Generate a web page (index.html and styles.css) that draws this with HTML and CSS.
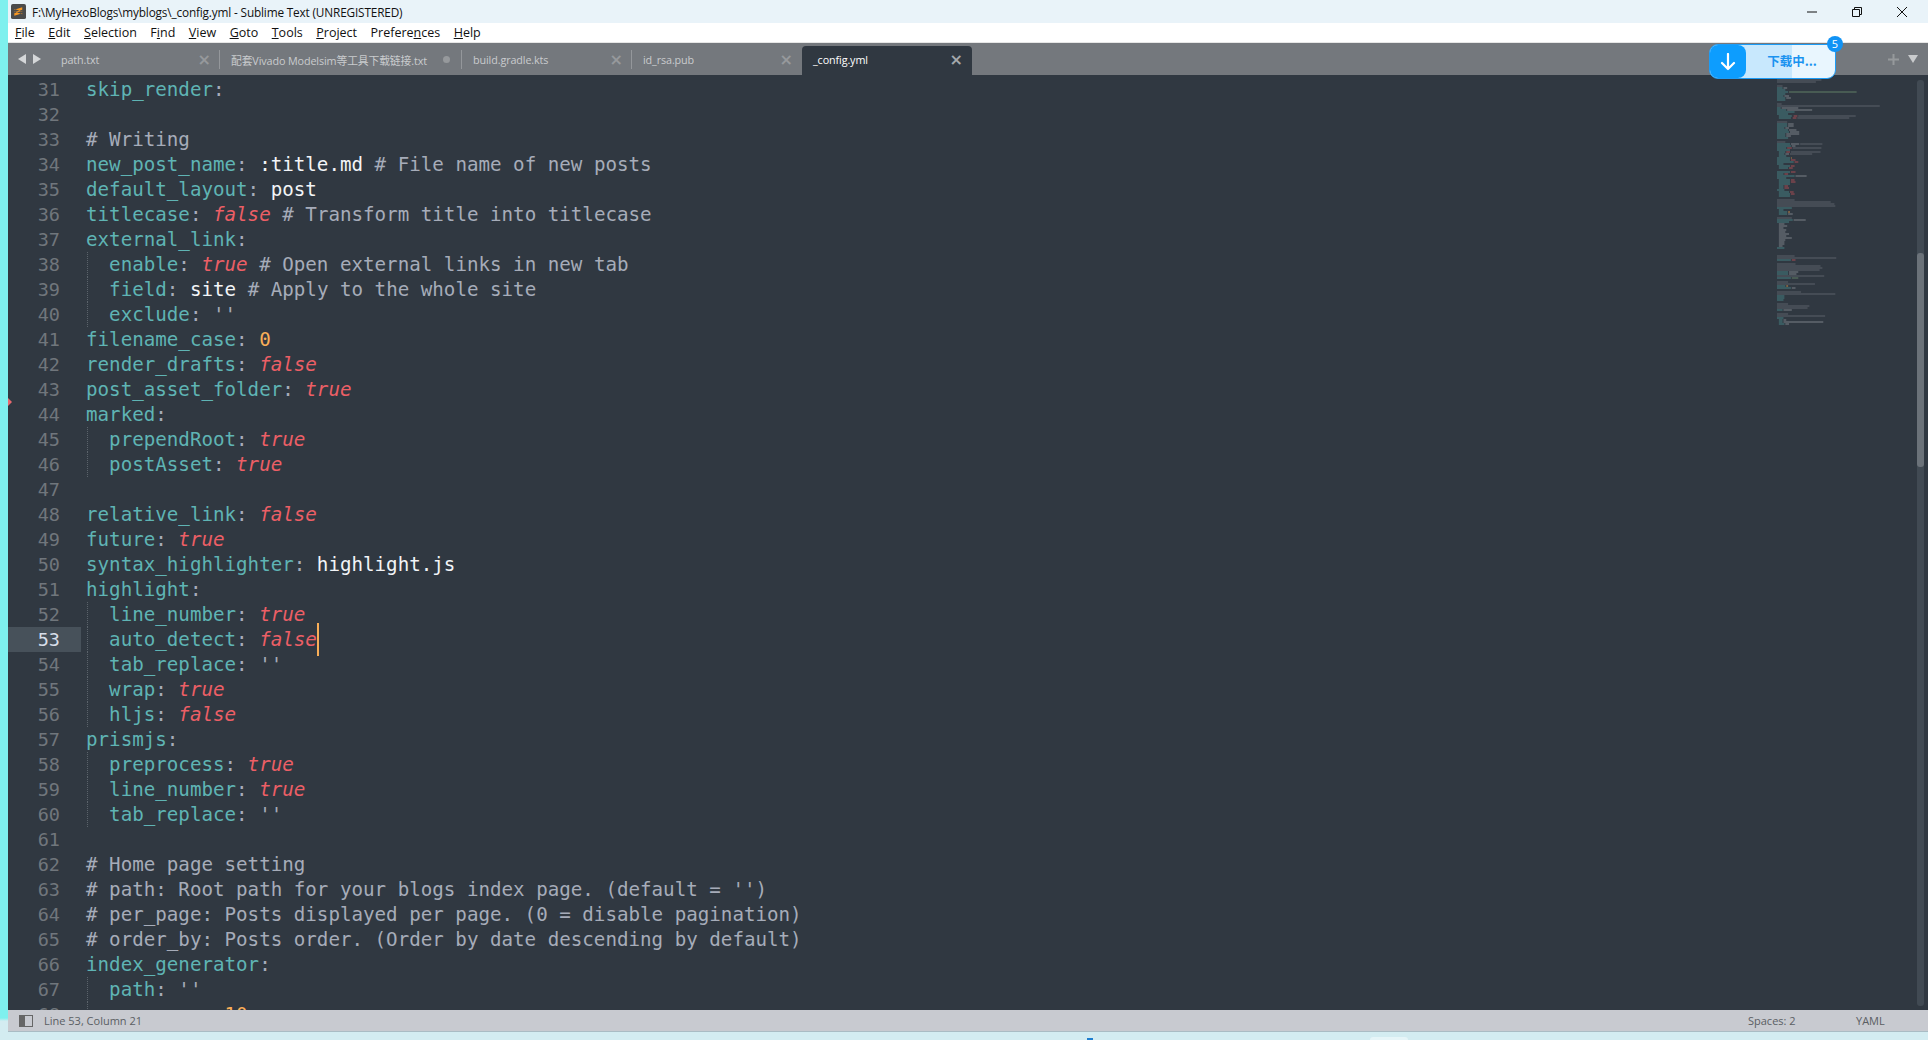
FILE: index.html
```html
<!DOCTYPE html>
<html lang="en">
<head>
<meta charset="utf-8">
<title>_config.yml - Sublime Text</title>
<link rel="stylesheet" href="styles.css">
</head>
<body>
<div class="window">
  <header class="titlebar">
    <svg class="app-icon" viewBox="0 0 16 16"><rect width="16" height="16" rx="2" fill="#4b4b4b"/><path d="M3.500 6.200 12 3.500v2.700L3.500 8.900zM3.500 8.100 12 10.800v-2.700L3.500 5.400zM3.500 9.900 12 7.200v2.700L3.500 12.600z" fill="#f89822"/></svg>
    <span class="title-text">F:\MyHexoBlogs\myblogs\_config.yml - Sublime Text (UNREGISTERED)</span>
    <div class="win-buttons">
      <svg class="win-btn" viewBox="0 0 12 12"><path d="M1 6h10" stroke="#111" fill="none"/></svg>
      <svg class="win-btn" viewBox="0 0 12 12"><path d="M1.500 3.500h7v7h-7zM3.500 3.500v-2h7v7h-2" stroke="#111" fill="none"/></svg>
      <svg class="win-btn" viewBox="0 0 12 12"><path d="M1 1l10 10M11 1L1 11" stroke="#111" fill="none"/></svg>
    </div>
  </header>
  <nav class="menubar">
    <span class="menu-item"><u>F</u>ile</span>
    <span class="menu-item"><u>E</u>dit</span>
    <span class="menu-item"><u>S</u>election</span>
    <span class="menu-item">F<u>i</u>nd</span>
    <span class="menu-item"><u>V</u>iew</span>
    <span class="menu-item"><u>G</u>oto</span>
    <span class="menu-item"><u>T</u>ools</span>
    <span class="menu-item"><u>P</u>roject</span>
    <span class="menu-item">Prefere<u>n</u>ces</span>
    <span class="menu-item"><u>H</u>elp</span>
  </nav>
  <div class="tabbar">
    <div class="tab-nav">
      <svg class="nav-arrow" viewBox="0 0 8 10"><path d="M8 0v10L0 5z"/></svg>
      <svg class="nav-arrow" viewBox="0 0 8 10"><path d="M0 0v10l8-5z"/></svg>
    </div>
    <div class="tab"><span class="tab-name">path.txt</span><span class="tab-close">×</span></div>
    <div class="tab tab-wide"><span class="tab-name">配套Vivado Modelsim等工具下载链接.txt</span><span class="tab-dot"></span></div>
    <div class="tab"><span class="tab-name">build.gradle.kts</span><span class="tab-close">×</span></div>
    <div class="tab tab-last"><span class="tab-name">id_rsa.pub</span><span class="tab-close">×</span></div>
    <div class="tab tab-active"><span class="tab-name">_config.yml</span><span class="tab-close">×</span></div>
    <div class="tab-tools">
      <svg class="tab-plus" viewBox="0 0 11 11"><path d="M5.500 0v11M0 5.500h11"/></svg>
      <svg class="tab-menu" viewBox="0 0 10 8"><path d="M0 0h10L5 8z"/></svg>
    </div>
  </div>
  <main class="editor">
    <span class="diff-mark"></span>
    <div class="gutter">
      <div class="ln">31</div><div class="ln">32</div><div class="ln">33</div><div class="ln">34</div><div class="ln">35</div>
      <div class="ln">36</div><div class="ln">37</div><div class="ln">38</div><div class="ln">39</div><div class="ln">40</div>
      <div class="ln">41</div><div class="ln">42</div><div class="ln">43</div><div class="ln">44</div><div class="ln">45</div>
      <div class="ln">46</div><div class="ln">47</div><div class="ln">48</div><div class="ln">49</div><div class="ln">50</div>
      <div class="ln">51</div><div class="ln">52</div><div class="ln ln-current">53</div><div class="ln">54</div><div class="ln">55</div>
      <div class="ln">56</div><div class="ln">57</div><div class="ln">58</div><div class="ln">59</div><div class="ln">60</div>
      <div class="ln">61</div><div class="ln">62</div><div class="ln">63</div><div class="ln">64</div><div class="ln">65</div>
      <div class="ln">66</div><div class="ln">67</div><div class="ln">68</div>
    </div>
    <div class="code">
      <div class="cl"><i class="k">skip_render</i><i class="p">:</i></div>
      <div class="cl"> </div>
      <div class="cl"><i class="c"># Writing</i></div>
      <div class="cl"><i class="k">new_post_name</i><i class="p">:</i> <i class="v">:title.md</i> <i class="c"># File name of new posts</i></div>
      <div class="cl"><i class="k">default_layout</i><i class="p">:</i> <i class="v">post</i></div>
      <div class="cl"><i class="k">titlecase</i><i class="p">:</i> <em class="b">false</em> <i class="c"># Transform title into titlecase</i></div>
      <div class="cl"><i class="k">external_link</i><i class="p">:</i></div>
      <div class="cl in"><i class="k">  enable</i><i class="p">:</i> <em class="b">true</em> <i class="c"># Open external links in new tab</i></div>
      <div class="cl in"><i class="k">  field</i><i class="p">:</i> <i class="v">site</i> <i class="c"># Apply to the whole site</i></div>
      <div class="cl in"><i class="k">  exclude</i><i class="p">:</i> <i class="c">''</i></div>
      <div class="cl"><i class="k">filename_case</i><i class="p">:</i> <i class="n">0</i></div>
      <div class="cl"><i class="k">render_drafts</i><i class="p">:</i> <em class="b">false</em></div>
      <div class="cl"><i class="k">post_asset_folder</i><i class="p">:</i> <em class="b">true</em></div>
      <div class="cl"><i class="k">marked</i><i class="p">:</i></div>
      <div class="cl in"><i class="k">  prependRoot</i><i class="p">:</i> <em class="b">true</em></div>
      <div class="cl in"><i class="k">  postAsset</i><i class="p">:</i> <em class="b">true</em></div>
      <div class="cl"> </div>
      <div class="cl"><i class="k">relative_link</i><i class="p">:</i> <em class="b">false</em></div>
      <div class="cl"><i class="k">future</i><i class="p">:</i> <em class="b">true</em></div>
      <div class="cl"><i class="k">syntax_highlighter</i><i class="p">:</i> <i class="v">highlight.js</i></div>
      <div class="cl"><i class="k">highlight</i><i class="p">:</i></div>
      <div class="cl in"><i class="k">  line_number</i><i class="p">:</i> <em class="b">true</em></div>
      <div class="cl in"><i class="k">  auto_detect</i><i class="p">:</i> <em class="b">false</em><span class="caret"></span></div>
      <div class="cl in"><i class="k">  tab_replace</i><i class="p">:</i> <i class="c">''</i></div>
      <div class="cl in"><i class="k">  wrap</i><i class="p">:</i> <em class="b">true</em></div>
      <div class="cl in"><i class="k">  hljs</i><i class="p">:</i> <em class="b">false</em></div>
      <div class="cl"><i class="k">prismjs</i><i class="p">:</i></div>
      <div class="cl in"><i class="k">  preprocess</i><i class="p">:</i> <em class="b">true</em></div>
      <div class="cl in"><i class="k">  line_number</i><i class="p">:</i> <em class="b">true</em></div>
      <div class="cl in"><i class="k">  tab_replace</i><i class="p">:</i> <i class="c">''</i></div>
      <div class="cl"> </div>
      <div class="cl"><i class="c"># Home page setting</i></div>
      <div class="cl"><i class="c"># path: Root path for your blogs index page. (default = '')</i></div>
      <div class="cl"><i class="c"># per_page: Posts displayed per page. (0 = disable pagination)</i></div>
      <div class="cl"><i class="c"># order_by: Posts order. (Order by date descending by default)</i></div>
      <div class="cl"><i class="k">index_generator</i><i class="p">:</i></div>
      <div class="cl in"><i class="k">  path</i><i class="p">:</i> <i class="c">''</i></div>
      <div class="cl in"><i class="k">  per_page</i><i class="p">:</i> <i class="n">10</i></div>
    </div>
    <svg class="minimap" viewBox="0 0 162 125" preserveAspectRatio="none">
      <path class="mm-c" d="M0 .5h20M0 1.500h48M0 2.500h42M0 4.500h6M0 13.500h5M0 14.500h111M23 19.500h62M22 20.500h56M0 22.500h11M0 32.500h9M25 33.500h24M17 35.500h31M15 37.500h32M14 38.500h24M0 61.500h19M0 62.500h58M0 63.500h62M0 64.500h63M0 70.500h16M0 89.500h19M0 90.500h64M0 93.500h20M0 94.500h47M0 95.500h49M0 96.500h46M0 99.500h51M0 102.500h12M0 103.500h41M0 107.500h26M0 108.500h63M0 113.500h12M0 114.500h35M0 115.500h33M0 118.500h12M0 119.500h52"/>
      <path class="mm-k" d="M0 5.500h6M0 6.500h9M0 7.500h12M0 8.500h9M0 9.500h7M0 10.500h9M0 11.500h9M0 15.500h4M0 16.500h10M0 17.500h19M0 18.500h12M2 19.500h14M2 20.500h13M0 23.500h11M0 24.500h11M0 25.500h8M0 26.500h12M0 27.500h13M0 28.500h9M0 29.500h9M0 30.500h12M0 33.500h14M0 34.500h15M0 35.500h10M0 36.500h14M2 37.500h7M2 38.500h6M2 39.500h8M0 40.500h14M0 41.500h14M0 42.500h18M0 43.500h7M2 44.500h12M2 45.500h10M0 47.500h14M0 48.500h7M0 49.500h19M0 50.500h10M2 51.500h12M2 52.500h12M2 53.500h12M2 54.500h5M2 55.500h5M0 56.500h8M2 57.500h11M2 58.500h12M2 59.500h12M0 65.500h16M2 66.500h5M2 67.500h9M2 68.500h9M0 71.500h17M0 72.500h13M0 85.500h8M0 91.500h15M0 97.500h12M0 98.500h12M0 100.500h15M0 104.500h9M0 105.500h15M0 109.500h8M0 110.500h8M0 111.500h7M0 116.500h6M0 120.500h7M2 121.500h4M2 122.500h4M2 123.500h6"/>
      <path class="mm-v" d="M7 5.500h4M8 9.500h5M10 10.500h5M5 15.500h18M11 16.500h27M12 23.500h6M12 24.500h6M9 25.500h4M13 26.500h8M14 27.500h10M10 28.500h14M10 29.500h5M15 33.500h9M16 34.500h4M9 38.500h4M20 49.500h12M12 68.500h5M18 71.500h13M2 73.500h6M2 74.500h9M2 75.500h5M2 76.500h8M2 77.500h7M2 78.500h11M2 79.500h8M2 80.500h14M2 81.500h7M2 82.500h6M2 83.500h6M2 84.500h4M13 97.500h10M13 98.500h8M16 105.500h4M7 116.500h9M7 121.500h3M7 122.500h43M9 123.500h4"/>
      <path class="mm-b" d="M18 19.500h4M17 20.500h4M11 35.500h5M10 37.500h4M15 41.500h5M19 42.500h4M15 44.500h4M13 45.500h4M15 47.500h5M8 48.500h4M15 51.500h4M15 52.500h5M8 54.500h4M8 55.500h5M14 57.500h4M15 58.500h4M16 91.500h4"/>
      <path class="mm-n" d="M15 40.500h1M12 67.500h2M10 104.500h2"/>
      <path class="mm-s" d="M13 7.500h73M16 100.500h7"/>
    </svg>
    <div class="scrollbar"><div class="scroll-thumb"></div></div>
  </main>
  <footer class="statusbar">
    <svg class="panel-icon" viewBox="0 0 14 12"><rect x=".5" y=".5" width="13" height="11" fill="none" stroke="#666"/><rect x="1" y="1" width="5" height="10" fill="#666"/></svg>
    <span class="status-text">Line 53, Column 21</span>
    <span class="status-text status-spaces">Spaces: 2</span>
    <span class="status-text status-syntax">YAML</span>
  </footer>
  <aside class="download">
    <div class="dl-icon"><svg viewBox="0 0 16 18"><path d="M8 1v15M2 10l6 6 6-6" fill="none" stroke="#fff" stroke-width="2.200" stroke-linecap="round" stroke-linejoin="round"/></svg></div>
    <div class="dl-body"><span class="dl-progress"></span><span class="dl-text">下载中...</span></div>
    <span class="dl-badge">5</span>
  </aside>
</div>
<span class="peek peek-blue"></span>
<span class="peek peek-white"></span>
</body>
</html>
```
FILE: styles.css
```css
* { box-sizing: border-box; }
html, body { margin: 0; height: 100%; overflow: hidden; }
body {
  position: relative;
  background: linear-gradient(#7ef0ee 0, #7ef0ee 1018px, #d3ecf1 1021px);
  font-family: "Open Sans", "Noto Sans CJK SC", sans-serif;
}
.window { margin-left: 8px; display: flex; flex-direction: column; height: 1032px; position: relative; }

.titlebar { height: 23px; background: #e9f3f9; display: flex; align-items: center; padding-left: 3px; }
.app-icon { width: 15px; height: 15px; margin-right: 6px; }
.title-text { font-size: 11.800px; color: #111; letter-spacing: -.16px; }
.win-buttons { margin-left: auto; display: flex; gap: 33px; padding-right: 20px; }
.win-btn { width: 12px; height: 12px; display: block; }

.menubar { height: 19px; background: #fff; display: flex; align-items: center; padding-left: 7px; gap: 13.500px; }
.menu-item { font-size: 12.500px; color: #111; }

.tabbar { height: 33px; background: #74787d; border-top: 1px solid #e6e6e6; display: flex; align-items: flex-end; position: relative; }
.tab-nav { width: 42px; height: 32px; display: flex; align-items: center; gap: 7px; padding-left: 10px; }
.nav-arrow { width: 8px; height: 10px; fill: #d5d7d9; }
.tab { width: 170px; height: 29px; display: flex; align-items: center; justify-content: space-between; padding: 0 9px 2px 11px; position: relative; flex: none; }
.tab::after { content: ""; position: absolute; right: 0; top: 4px; bottom: 6px; width: 1px; background: #94979b; }
.tab-wide { width: 242px; }
.tab-last::after, .tab-active::after { display: none; }
.tab-active { background: #303841; border-radius: 4px 4px 0 0; }
.tab-name { font-size: 10.800px; letter-spacing: -.12px; color: #c9cbcd; white-space: nowrap; }
.tab-active .tab-name { color: #fff; }
.tab-close { font-size: 16px; line-height: 1; color: #96999c; font-family: "DejaVu Sans", sans-serif; font-weight: bold; }
.tab-active .tab-close { color: #a4a8ac; }
.tab-dot { width: 7px; height: 7px; border-radius: 50%; background: #96999c; margin-right: 3px; }
.tab-tools { margin-left: auto; height: 32px; display: flex; align-items: center; gap: 9px; padding-right: 10px; }
.tab-plus { width: 11px; height: 11px; stroke: #96999c; stroke-width: 2; }
.tab-menu { width: 10px; height: 8px; fill: #c9cbcd; }

.editor { flex: 1; min-height: 0; background: #303841; display: flex; overflow: hidden; position: relative; padding-top: 2px; font-family: "DejaVu Sans Mono", monospace; font-size: 19.180px; line-height: 25px; }
.gutter { width: 73px; flex: none; color: #70767c; font-size: 18.500px; }
.ln { height: 25px; text-align: right; padding-right: 21px; }
.ln-current { background: #47515a; color: #d8dee9; }
.code { flex: 1; padding-left: 5px; }
.cl { height: 25px; position: relative; white-space: pre; }
.cl i { font-style: normal; }
.cl em { font-style: italic; }
.k { color: #5fb4b4; }
.p { color: #a6acb9; }
.c { color: #a6acb9; }
.v { color: #f2f4f7; }
.n { color: #f9ae58; }
.b { color: #ec5f66; }
.in::before { content: ""; position: absolute; left: 1px; top: 0; bottom: 0; border-left: 1px dotted #5b636b; }
.caret { display: inline-block; width: 2px; height: 33px; background: #f9ae58; position: absolute; top: -4px; }
.diff-mark { position: absolute; left: 0; top: 323px; width: 0; height: 0; border: 4px solid transparent; border-left-color: #e9696f; }

.minimap { position: absolute; left: 1769px; top: 2px; width: 150px; height: 250px; stroke-width: .6; fill: none; }
.minimap path { fill: none; }
.mm-c { stroke: #8d939e; opacity: .45; }
.mm-k { stroke: #4e9c9c; opacity: .7; }
.mm-v { stroke: #c6cad0; opacity: .5; }
.mm-b { stroke: #d9555d; opacity: .7; }
.mm-n { stroke: #f2a24c; opacity: .8; }
.mm-s { stroke: #84ad80; opacity: .6; }

.scrollbar { position: absolute; right: 4px; top: 5px; bottom: 4px; width: 7px; background: #414a53; border-radius: 3px; }
.scroll-thumb { margin-top: 173px; height: 214px; background: #6b7279; border-radius: 3px; }

.download { position: absolute; left: 1701px; top: 44px; width: 127px; height: 35px; display: flex; border: 1px solid #1c9cf6; border-radius: 9px; background: #e9f6fe; }
.dl-icon { width: 36px; flex: none; background: #0d9dfe; border-radius: 8px; display: flex; align-items: center; justify-content: center; position: relative; z-index: 1; }
.dl-icon svg { width: 16px; height: 18px; }
.dl-body { flex: 1; position: relative; display: flex; align-items: center; justify-content: center; padding-left: 3px; font-family: "Noto Sans CJK SC", sans-serif; }
.dl-progress { position: absolute; left: -6px; top: 0; bottom: 0; width: 52px; background: #c8e8fd; }
.dl-text { position: relative; font-size: 12.500px; font-weight: bold; color: #1a93f0; line-height: 1; }
.dl-badge { position: absolute; right: -8px; top: -9px; width: 16px; height: 16px; border-radius: 50%; background: #1193f5; color: #fff; font-size: 11px; line-height: 16px; text-align: center; z-index: 2; }

.statusbar { height: 22px; background: #c8cad0; border-bottom: 1px solid #a9bcc4; display: flex; align-items: center; padding-left: 11px; position: relative; }
.panel-icon { width: 14px; height: 12px; margin-right: 11px; }
.status-text { font-size: 11px; color: #5a5e63; }
.status-spaces { position: absolute; left: 1740px; }
.status-syntax { position: absolute; left: 1848px; }

.peek { position: absolute; bottom: 0; }
.peek-blue { left: 1087px; width: 6px; height: 2px; background: #1f7fd0; }
.peek-white { left: 1370px; width: 38px; height: 3px; background: #e6f5f8; border-radius: 3px 3px 0 0; }
```
